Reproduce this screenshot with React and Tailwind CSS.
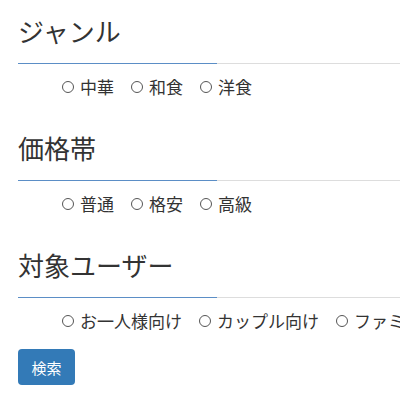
import React from "react";

const sections = [
  { title: "ジャンル", options: ["中華", "和食", "洋食"] },
  { title: "価格帯", options: ["普通", "格安", "高級"] },
  { title: "対象ユーザー", options: ["お一人様向け", "カップル向け", "ファミリー向け"] },
];

function Section({ title, options, first }) {
  return (
    <div className={first ? "" : "mt-[32px]"}>
      <div className="pl-[18px] text-[26px] leading-[34px] text-[#333333] whitespace-nowrap">{title}</div>
      <div className="mt-[15px] ml-[18px] h-px bg-[#dddddd] w-[400px] flex">
        <div className="w-[199px] h-px bg-[#5b8ec6]" />
      </div>
      <div className="mt-[11px] pl-[62px] flex items-center h-[24px] whitespace-nowrap text-[17px] leading-[24px] text-[#333333]">
        {options.map((o) => (
          <div key={o} className="flex items-center mr-[17px] shrink-0">
            <span className="w-[12px] h-[12px] rounded-full border border-[#555555] shrink-0" />
            <span className="ml-[6px]">{o}</span>
          </div>
        ))}
      </div>
    </div>
  );
}

export default function App() {
  return (
    <div
      className="w-[400px] h-[400px] overflow-hidden bg-white pt-[14px]"
      style={{ fontFamily: '"Noto Sans CJK JP", "Noto Sans", sans-serif' }}
    >
      {sections.map((s, i) => (
        <Section key={s.title} {...s} first={i === 0} />
      ))}
      <div className="pl-[18px] mt-[16px]">
        <button className="w-[57px] h-[36px] rounded-[4px] bg-[#337ab7] text-white text-[15px] leading-none flex items-center justify-center">
          検索
        </button>
      </div>
    </div>
  );
}
